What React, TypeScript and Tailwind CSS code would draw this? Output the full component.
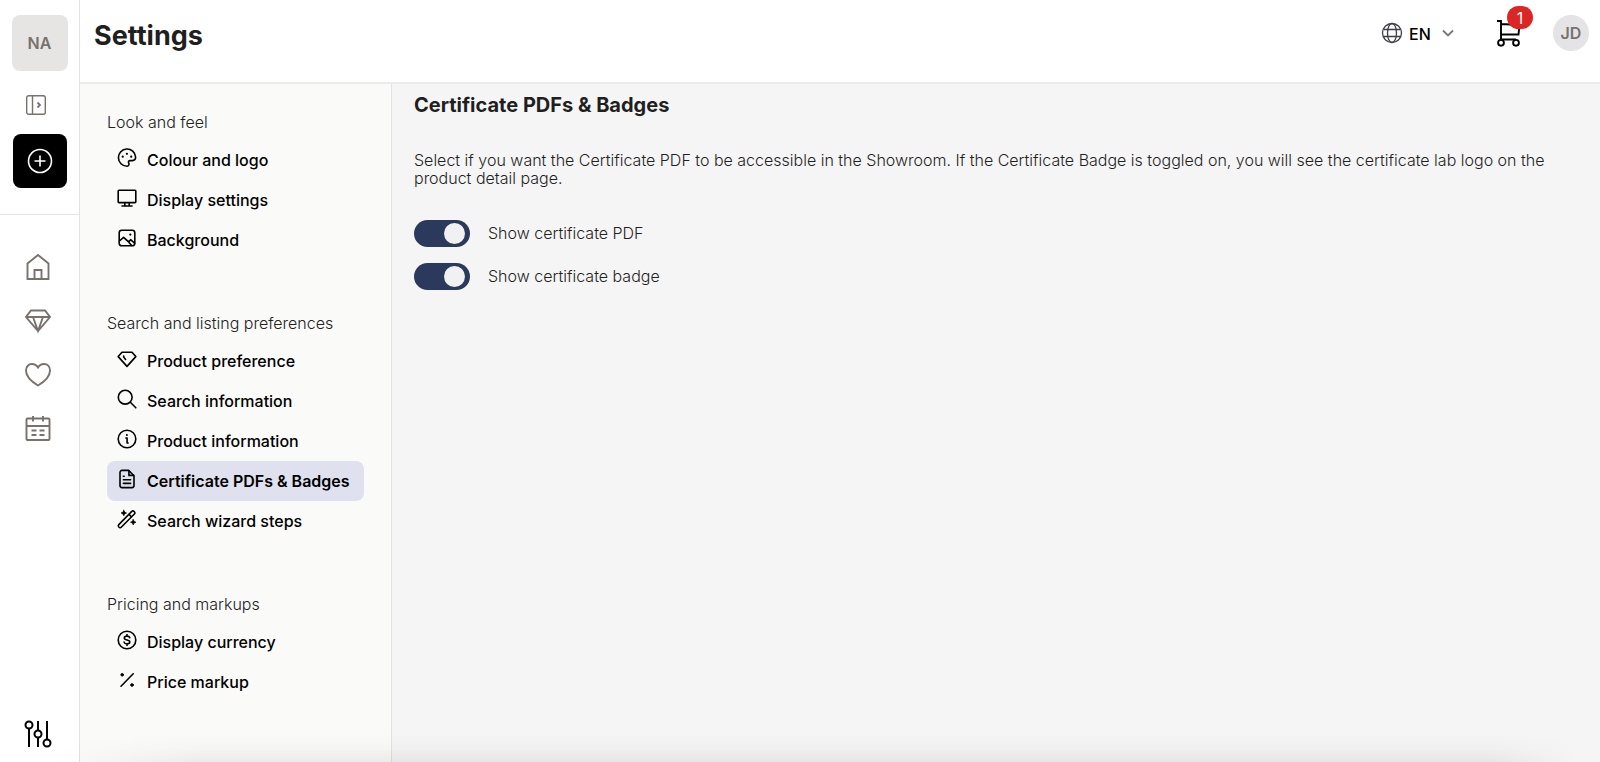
import { useState } from 'react'
import type { ReactNode } from 'react'

const ICONS: Record<string, ReactNode> = {
  palette: (
    <>
      <path d="M11 19.2A8.6 8.6 0 1 1 19.6 10c0 2.2-1.3 3.6-3.3 3.6h-2.2c-1.5 0-2.1 1.2-1.4 2.3.8 1.3.1 3.3-1.7 3.3Z" />
      <path d="M6.7 9.7h.01M10.9 6.8h.01M15.2 9.7h.01" strokeWidth="2.2" />
    </>
  ),
  monitor: (
    <>
      <rect x="2.2" y="3.2" width="17.6" height="12.4" rx=".8" />
      <path d="M8.8 15.8v3M13.2 15.8v3M6 19h10" />
    </>
  ),
  image: (
    <>
      <rect x="3.2" y="3.2" width="15.6" height="15.6" rx="2.6" />
      <path d="m3.4 14 4.2-3.7 5 4.6 2-2.2 4 3.5M12.6 14.9l3 3.6" />
      <path d="M14.3 7.6h.01" strokeWidth="2.2" />
    </>
  ),
  gem: (
    <>
      <path d="M6 4.2h10l3.8 4.4L11 18.4 2.2 8.6 6 4.2Z" />
      <path d="m7.6 8 .4 1.6 1.6 1.9" />
    </>
  ),
  search: (
    <>
      <circle cx="9.2" cy="9.2" r="6.9" />
      <path d="m14.3 14.3 5.5 5.5" />
    </>
  ),
  info: (
    <>
      <circle cx="11" cy="11" r="8.8" />
      <path d="M9.9 10h1.2v5h1" />
      <path d="M10.9 6.9h.01" strokeWidth="2" />
    </>
  ),
  document: (
    <>
      <path d="M12.6 2.4H6a2 2 0 0 0-2 2v13.2a2 2 0 0 0 2 2h10a2 2 0 0 0 2-2V7.700l-5.400-5.300Z" />
      <path d="M12.900 2.800v4.600h4.800M7.400 11.800h7.200M7.400 15.400h7.200M7.400 8.200h.8" />
    </>
  ),
  wand: (
    <>
      <path d="M2.800 16.600 15.800 3.400a1.500 1.500 0 0 1 2.200 0l.4.4a1.500 1.500 0 0 1 0 2.200L5.200 19.200a1.500 1.500 0 0 1-2.200 0l-.2-.2a1.700 1.700 0 0 1 0-2.400ZM13 6.400l2.600 2.600" />
      <path d="m7.800 2.200.9 1.900 1.900.9-1.900.9-.9 1.900-.9-1.900L5 5l1.900-.9ZM17.200 11.400l.9 1.900 1.900.9-1.900.9-.9 1.900-.9-1.900-1.900-.9 1.900-.9Z" fill="currentColor" strokeWidth=".6" />
    </>
  ),
  dollar: (
    <>
      <circle cx="11" cy="11" r="8.800" />
      <path d="M13.800 8.800c-.3-1.200-1.400-1.700-2.800-1.700-1.500 0-2.700.6-2.700 1.900 0 2.800 5.500 1.200 5.500 4 0 1.300-1.200 1.900-2.800 1.900-1.500 0-2.600-.6-2.900-1.800M11 5.500v1.600M11 14.900v1.600" />
    </>
  ),
  percent: (
    <>
      <path d="M17.200 4.800 5 17.200" />
      <circle cx="6.200" cy="5.800" r="1.300" fill="currentColor" strokeWidth="1" />
      <circle cx="16" cy="16" r="1.300" fill="currentColor" strokeWidth="1" />
    </>
  ),
}

const SECTIONS = [
  {
    title: 'Look and feel',
    items: [
      { icon: 'palette', label: 'Colour and logo' },
      { icon: 'monitor', label: 'Display settings' },
      { icon: 'image', label: 'Background' },
    ],
  },
  {
    title: 'Search and listing preferences',
    items: [
      { icon: 'gem', label: 'Product preference' },
      { icon: 'search', label: 'Search information' },
      { icon: 'info', label: 'Product information' },
      { icon: 'document', label: 'Certificate PDFs & Badges' },
      { icon: 'wand', label: 'Search wizard steps' },
    ],
  },
  {
    title: 'Pricing and markups',
    items: [
      { icon: 'dollar', label: 'Display currency' },
      { icon: 'percent', label: 'Price markup' },
    ],
  },
]

const RAIL = [
  { label: 'Home', icon: <path d="M3.500 10.500 14 2l10.500 8.500V26h-21V10.500ZM10.500 26v-9h7v9" /> },
  { label: 'Diamonds', icon: <path d="M7 3.500h14l5 6.500-12 14L2 10l5-6.500ZM2 10h24M9 10l5 14 5-14" /> },
  {
    label: 'Favourites',
    icon: <path d="M14 24.500C9 21.500 2 16.500 2 9.500 2 5.500 4.700 3 8 3c2.600 0 4.700 1.300 6 3.500C15.300 4.300 17.400 3 20 3c3.300 0 6 2.500 6 6.500 0 7-7 12-12 15Z" />,
  },
  {
    label: 'Calendar',
    icon: (
      <>
        <rect x="2.500" y="3.500" width="23" height="21.500" rx="1" />
        <path d="M2.500 11h23M9 1v5.500M19 1v5.500M7.500 15.500h5M15.500 15.500h5M7.500 20h5M15.500 20h5" />
      </>
    ),
  },
]

export default function App() {
  const [active, setActive] = useState('Certificate PDFs & Badges')

  return (
    <div className="flex min-h-screen bg-white font-[Inter,sans-serif] text-black">
      <aside className="flex w-20 shrink-0 flex-col border-r border-[#e2e2e2]">
        <div className="flex flex-col items-center border-b border-[#e2e2e2] pt-[15px] pb-[26px]">
          <div className="flex size-14 items-center justify-center rounded-lg bg-[#e7e5e4] font-semibold text-[#78716c]">NA</div>
          <button aria-label="Expand menu" className="mt-[23px] mr-2 text-[#78716c]">
            <svg width="22" height="22" viewBox="0 0 22 22" fill="none" stroke="currentColor" strokeWidth="1.400">
              <rect x="1.700" y="1.700" width="18.600" height="18.600" rx="2" />
              <path d="M7.500 1.700v18.600" />
              <path d="m12.500 8.500 2.500 2.500-2.500 2.500" strokeWidth="1.800" />
            </svg>
          </button>
          <button aria-label="Add" className="mt-[18px] flex size-[54px] items-center justify-center rounded-lg bg-black text-white">
            <svg width="26" height="26" viewBox="0 0 26 26" fill="none" stroke="currentColor" strokeWidth="1.600">
              <circle cx="13" cy="13" r="11.500" />
              <path d="M13 7.500v11M7.500 13h11" />
            </svg>
          </button>
        </div>
        <nav className="flex flex-1 flex-col items-center gap-[26px] pt-[38px] pr-1 pb-[14px] text-[#78716c]">
          {RAIL.map(item => (
            <a key={item.label} href="#" aria-label={item.label}>
              <svg width="28" height="28" viewBox="0 0 28 28" fill="none" stroke="currentColor" strokeWidth="1.900">
                {item.icon}
              </svg>
            </a>
          ))}
          <a href="#" aria-label="Settings" className="mt-auto text-black">
            <svg width="28" height="28" viewBox="0 0 28 28" fill="none" stroke="currentColor" strokeWidth="2">
              <circle cx="5" cy="5" r="3.500" />
              <circle cx="14" cy="14" r="3.500" />
              <circle cx="23" cy="23" r="3.500" />
              <path d="M5 8.500V27M14 1v9.500M14 17.500V27M23 1v18.500" />
            </svg>
          </a>
        </nav>
      </aside>

      <div className="flex min-w-0 flex-1 flex-col">
        <header className="flex h-[84px] items-start justify-between border-b-2 border-[#ebebeb] pr-[11px] pl-[14px]">
          <h1 className="pt-4 text-[27px] leading-10 font-bold text-[#1f1f1f]">Settings</h1>
          <div className="flex h-[66px] items-center">
            <Globe />
            <div className="relative ml-[6px] flex items-center">
              <select aria-label="Language" className="h-8 w-[50px] appearance-none bg-transparent pt-[2px] font-medium">
                <option>EN</option>
              </select>
              <svg className="pointer-events-none absolute right-1" width="14" height="14" viewBox="0 0 14 14" fill="none" stroke="#777" strokeWidth="1.800">
                <path d="m2 4.500 5 5 5-5" />
              </svg>
            </div>
            <button aria-label="Cart" className="relative ml-[38px]">
              <svg width="26" height="28" viewBox="0 0 26 28" fill="none" stroke="currentColor" strokeWidth="1.900">
                <path d="M0 2h4v18.500M4 5l18.500 1-1 9.500H4M4 20.500h15" />
                <circle cx="4" cy="23.800" r="2.900" />
                <circle cx="19" cy="23.800" r="2.900" />
              </svg>
              <span className="absolute -top-[13px] left-[10px] flex h-[23px] w-[26px] items-center justify-center rounded-full bg-[#dc2626] text-white">1</span>
            </button>
            <div className="ml-[30px] flex size-9 items-center justify-center rounded-full bg-[#e4e4e7] font-semibold text-[#78716c]">JD</div>
          </div>
        </header>

        <div className="flex flex-1">
          <nav className="flex w-[312px] shrink-0 flex-col gap-[53px] border-r border-[#e2e2e2] bg-[#fafaf9] px-[27px] pt-7 pb-8">
            {SECTIONS.map(section => (
              <section key={section.title}>
                <h2 className="h-7 leading-5 font-light text-[#222]">{section.title}</h2>
                {section.items.map(item => (
                  <a
                    key={item.label}
                    href="#"
                    onClick={() => setActive(item.label)}
                    className={`flex h-10 items-center gap-[9px] rounded-lg pl-[9px] whitespace-nowrap ${
                      active === item.label ? 'bg-[#dfe2ee] font-semibold' : 'font-medium'
                    }`}
                  >
                    <NavIcon name={item.icon} />
                    {item.label}
                  </a>
                ))}
              </section>
            ))}
          </nav>

          <main className="min-w-0 flex-1 bg-[#f5f5f5] pt-[7px] pr-10 pl-[22px] text-[#1f1f1f]">
            <h2 className="text-xl leading-7 font-bold">Certificate PDFs &amp; Badges</h2>
            <p className="mt-8 leading-[18px] font-light">
              Select if you want the Certificate PDF to be accessible in the Showroom. If the Certificate Badge is toggled on, you will
              see the certificate lab logo on the product detail page.
            </p>
            <div className="mt-[33px] flex flex-col items-start gap-4">
              <Toggle label="Show certificate PDF" />
              <Toggle label="Show certificate badge" />
            </div>
          </main>
        </div>
      </div>

      {/* Fade along the bottom edge of the window */}
      <div className="pointer-events-none fixed right-6 bottom-0 left-14 h-7 bg-linear-to-t from-black/6 via-black/2 to-transparent mask-r-from-94% mask-l-from-90%" />
    </div>
  )
}

function NavIcon({ name }: { name: string }) {
  return (
    <svg className="mb-1 shrink-0" width="22" height="22" viewBox="0 0 22 22" fill="none" stroke="currentColor" strokeWidth="1.600" strokeLinecap="round" strokeLinejoin="round">
      {ICONS[name]}
    </svg>
  )
}

function Globe() {
  return (
    <svg width="22" height="22" viewBox="0 0 22 22" fill="none" stroke="#3f3f46" strokeWidth="1.300">
      <circle cx="11" cy="11" r="9.500" />
      <ellipse cx="11" cy="11" rx="4.500" ry="9.500" />
      <path d="M2.800 7.500h16.400M2.800 14.500h16.400" />
    </svg>
  )
}

function Toggle({ label }: { label: string }) {
  return (
    <label className="flex items-center gap-[18px] font-light">
      <input
        type="checkbox"
        defaultChecked
        className="h-[27px] w-14 shrink-0 appearance-none rounded-full bg-gray-400 px-[5px] py-[3px] before:block before:size-[21px] before:rounded-full before:bg-[#f1f1f1] checked:bg-[#2b3a5c] checked:before:ml-auto"
      />
      <span className="pb-[2px]">{label}</span>
    </label>
  )
}
